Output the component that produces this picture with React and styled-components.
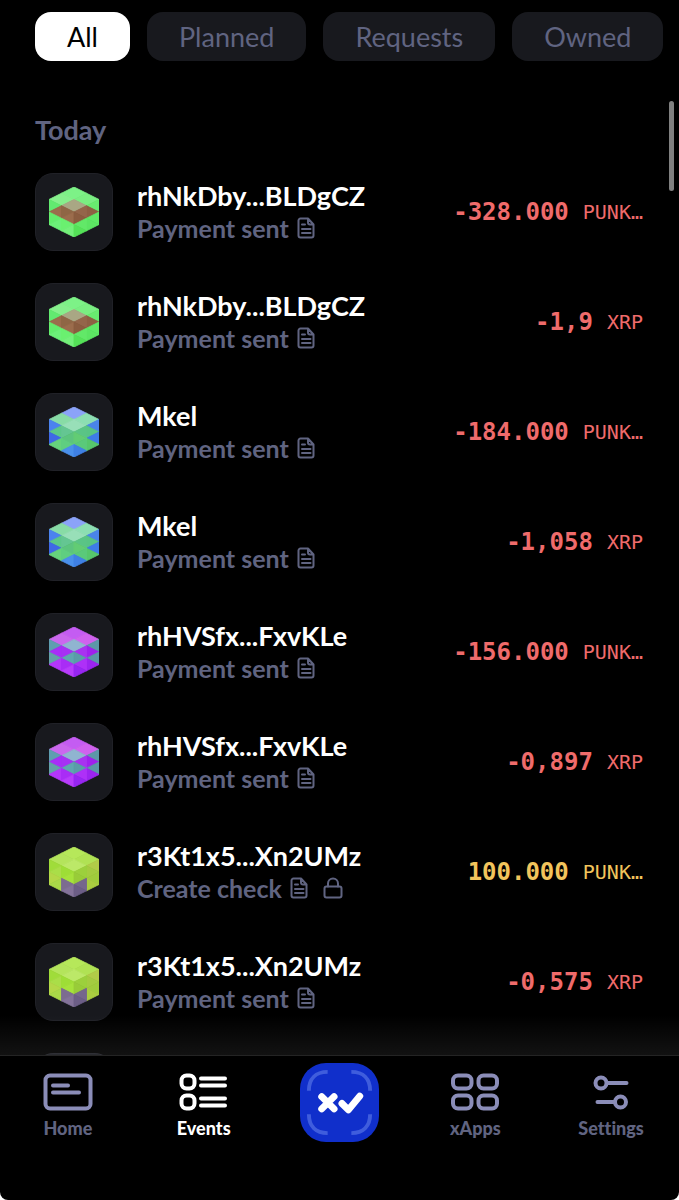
import React from 'react';
import styled, { createGlobalStyle } from 'styled-components';

const GlobalStyle = createGlobalStyle`
  * {
    box-sizing: border-box;
  }
  body {
    margin: 0;
    background: #fff;
    font-family: Lato, sans-serif;
    font-variant-ligatures: none;
  }
`;

const filters = ['All', 'Planned', 'Requests', 'Owned'];

const green = {
  top: ['#7df287', '#86f08c', '#7aee82', '#a9a784'],
  left: { a: '#62ea70', b: '#9b6c4c', c: '#63ed6c', d: '#6cf078', e: '#8f6645', f: '#9b6c4c', g: '#6af070', h: '#74f07a' },
  right: { a: '#68ec70', b: '#8d5f43', c: '#5fe866', d: '#5ce463', e: '#94654a', f: '#8a5c3f', g: '#62e868', h: '#55e258' },
};

const blue = {
  top: ['#8ba3f8', '#88dca6', '#8cdeb2', '#98dfb8'],
  left: { a: '#4c82ee', b: '#5cc78a', c: '#3f68e6', d: '#66d37c', e: '#64c692', f: '#5cc47e', g: '#5fce80', h: '#4a90ea' },
  right: { a: '#4a84ea', b: '#58c484', c: '#3f7be8', d: '#56c66c', e: '#5ac486', f: '#62cc74', g: '#5ac97a', h: '#3f80e4' },
};

const purple = {
  top: ['#c45cf2', '#cb68ee', '#d062ee', '#90b4d0'],
  left: { a: '#5f9eb0', b: '#a82cf8', c: '#62a0a8', d: '#b436fa', e: '#a630f4', f: '#5fa6b0', g: '#a92cf6', h: '#b83cfc' },
  right: { a: '#5c98a8', b: '#a020ee', c: '#5a98a6', d: '#9c24f0', e: '#a832f0', f: '#5a9ca8', g: '#ae30f8', h: '#9826f2' },
};

const lime = {
  top: ['#b6e85a', '#b4e45c', '#b0e254', '#bce868'],
  left: { a: '#a0dc3a', b: '#aade48', c: '#b4d848', d: '#aad848', e: '#9ede36', f: '#a6e23c', g: '#7c6c90', h: '#84739a' },
  right: { a: '#b0cc48', b: '#a4cc40', c: '#a0cc3c', d: '#aacc40', e: '#9cd03c', f: '#98cc38', g: '#75668c', h: '#6c5e86' },
};

const events = [
  { name: 'rhNkDby...BLDgCZ', type: 'Payment sent', amount: '-328.000', currency: 'PUNK…', colors: green },
  { name: 'rhNkDby...BLDgCZ', type: 'Payment sent', amount: '-1,9', currency: 'XRP', colors: green },
  { name: 'Mkel', type: 'Payment sent', amount: '-184.000', currency: 'PUNK…', colors: blue },
  { name: 'Mkel', type: 'Payment sent', amount: '-1,058', currency: 'XRP', colors: blue },
  { name: 'rhHVSfx...FxvKLe', type: 'Payment sent', amount: '-156.000', currency: 'PUNK…', colors: purple },
  { name: 'rhHVSfx...FxvKLe', type: 'Payment sent', amount: '-0,897', currency: 'XRP', colors: purple },
  { name: 'r3Kt1x5...Xn2UMz', type: 'Create check', amount: '100.000', currency: 'PUNK…', colors: lime, locked: true },
  { name: 'r3Kt1x5...Xn2UMz', type: 'Payment sent', amount: '-0,575', currency: 'XRP', colors: lime },
];

// triangles of one side face, on a 4 x 8 grid
const sideFace = {
  a: '0,2 0,4 2,3',
  b: '0,4 2,3 2,5',
  c: '0,4 0,6 2,5',
  d: '0,6 2,5 2,7',
  e: '2,3 4,4 2,5',
  f: '4,4 2,5 4,6',
  g: '2,5 2,7 4,6',
  h: '2,7 4,6 4,8',
};
const topFace = ['4,0 6,1 4,2 2,1', '2,1 4,2 2,3 0,2', '6,1 8,2 6,3 4,2', '4,2 6,3 4,4 2,3'];

function Cube({ colors }) {
  return (
    <svg width="50" height="50" viewBox="0 0 8 8" aria-hidden="true">
      {topFace.map((points, i) => (
        <Facet key={points} points={points} color={colors.top[i]} />
      ))}
      {Object.keys(sideFace).map((k) => (
        <Facet key={k} points={sideFace[k]} color={colors.left[k]} />
      ))}
      <g transform="matrix(-1 0 0 1 8 0)">
        {Object.keys(sideFace).map((k) => (
          <Facet key={k} points={sideFace[k]} color={colors.right[k]} />
        ))}
      </g>
    </svg>
  );
}

function DocIcon() {
  return (
    <Glyph width="18" height="22" viewBox="0 0 18 22" aria-hidden="true">
      <path d="M11 1.5H3.5a2 2 0 0 0-2 2v15a2 2 0 0 0 2 2h11a2 2 0 0 0 2-2V7.5zM11 1.5v4a2 2 0 0 0 2 2h3.5M5 7.5h3M5 12h8.500M5 16h8.500" />
    </Glyph>
  );
}

function LockIcon() {
  return (
    <Glyph width="20" height="22" viewBox="0 0 20 22" aria-hidden="true">
      <rect x="1.500" y="9.500" width="17" height="11" rx="2" />
      <path d="M5 9.500V6.500a5 5 0 0 1 10 0v3" />
    </Glyph>
  );
}

function HomeIcon() {
  return (
    <NavGlyph width="50" height="38" viewBox="0 0 50 38" aria-hidden="true">
      <rect x="2.500" y="2.500" width="45" height="33" rx="4.500" />
      <path d="M10 12.500h15M10 19.500h26" />
    </NavGlyph>
  );
}

function EventsIcon() {
  return (
    <NavGlyph width="50" height="38" viewBox="0 0 50 38" aria-hidden="true">
      <rect x="2.500" y="2.500" width="13" height="13" rx="5" />
      <rect x="2.500" y="22.500" width="13" height="13" rx="5" />
      <path d="M22 5.500h24M22 12.500h24M22 25.500h24M22 32.500h24" />
    </NavGlyph>
  );
}

function AppsIcon() {
  return (
    <NavGlyph width="50" height="38" viewBox="0 0 50 38" aria-hidden="true">
      <rect x="3" y="2.500" width="18.500" height="13" rx="5" />
      <rect x="28.500" y="2.500" width="18.500" height="13" rx="5" />
      <rect x="3" y="22.500" width="18.500" height="13" rx="5" />
      <rect x="28.500" y="22.500" width="18.500" height="13" rx="5" />
    </NavGlyph>
  );
}

function SettingsIcon() {
  return (
    <NavGlyph width="50" height="38" viewBox="0 0 50 38" aria-hidden="true">
      <circle cx="15" cy="10" r="5.500" />
      <path d="M21 10h19.500M11.500 29h17" />
      <circle cx="34.500" cy="29" r="5.500" />
    </NavGlyph>
  );
}

function ScanIcon() {
  return (
    <svg width="79" height="79" viewBox="0 0 80 80" fill="none" strokeLinecap="round" strokeLinejoin="round" aria-hidden="true">
      <path
        stroke="#3f5ddd"
        strokeWidth="4"
        strokeLinecap="butt"
        d="M9 28C9 16 16 9 28 9M52 9c12 0 19 7 19 19M9 52c0 12 7 19 19 19M52 71c12 0 19-7 19-19"
      />
      <path stroke="#fff" strokeWidth="7" d="M22 34l12.500 12.500M34.500 34l-12.500 12.500M42.500 41l6.500 6.500L60.500 33.500" />
    </svg>
  );
}

export default function App() {
  return (
    <Screen>
      <GlobalStyle />
      <Filters>
        {filters.map((f) => (
          <Filter key={f} type="button" $active={f === 'All'}>
            {f}
          </Filter>
        ))}
      </Filters>
      <Events>
        <Day>Today</Day>
        <List>
          {events.map((e, i) => (
            <Row key={i}>
              <Avatar>
                <Cube colors={e.colors} />
              </Avatar>
              <Info>
                <Name>{e.name}</Name>
                <Type>
                  {e.type}
                  <Icons>
                    <DocIcon />
                    {e.locked && <LockIcon />}
                  </Icons>
                </Type>
              </Info>
              <Amount $pending={e.locked}>
                {e.amount}
                <Currency>{e.currency}</Currency>
              </Amount>
            </Row>
          ))}
          <Row>
            <Avatar />
          </Row>
        </List>
        <Fade />
        <Thumb />
      </Events>
      <Nav>
        <NavItem href="#home">
          <HomeIcon />
          Home
        </NavItem>
        <NavItem href="#events" $active>
          <EventsIcon />
          Events
        </NavItem>
        <ScanCell>
          <Scan type="button" aria-label="Scan">
            <ScanIcon />
          </Scan>
        </ScanCell>
        <NavItem href="#xapps">
          <AppsIcon />
          xApps
        </NavItem>
        <NavItem href="#settings">
          <SettingsIcon />
          Settings
        </NavItem>
      </Nav>
    </Screen>
  );
}

const Screen = styled.div`
  display: flex;
  flex-direction: column;
  height: 100vh;
  overflow: hidden;
  background: #000;
  border-radius: 0 0 8px 8px;
`;

const Filters = styled.div`
  display: flex;
  flex: none;
  gap: 17px;
  padding: 12px 15px 0 35px;
`;

const Filter = styled.button`
  height: 49px;
  padding: 0 32px;
  border: 0;
  border-radius: 16px;
  background: ${(p) => (p.$active ? '#fff' : '#18191e')};
  color: ${(p) => (p.$active ? '#000' : '#606481')};
  font-family: inherit;
  font-size: 27px;
  line-height: 32px;
`;

const Events = styled.main`
  position: relative;
  flex: 1;
  min-height: 0;
  overflow: hidden;
  padding: 53px 36px 0 35px;
`;

const Day = styled.h2`
  margin: 0 0 27px;
  color: #606481;
  font-size: 27px;
  font-weight: 700;
  line-height: 32px;
`;

const List = styled.ul`
  display: flex;
  flex-direction: column;
  gap: 32px;
  margin: 0;
  padding: 0;
  list-style: none;
`;

const Row = styled.li`
  display: flex;
  align-items: center;
  gap: 24px;
`;

const Avatar = styled.div`
  display: flex;
  flex: none;
  align-items: center;
  justify-content: center;
  width: 78px;
  height: 78px;
  border: 1px solid #202127;
  border-radius: 18px;
  background: #18191e;
`;

const Facet = styled.polygon`
  fill: ${(p) => p.color};
  stroke: ${(p) => p.color};
  stroke-width: 0.14px;
  stroke-linejoin: round;
`;

const Info = styled.div`
  flex: 1;
  min-width: 0;
`;

const Name = styled.div`
  color: #fff;
  font-size: 27px;
  font-weight: 700;
  line-height: 32px;
`;

const Type = styled.div`
  display: flex;
  align-items: center;
  gap: 8px;
  color: #606481;
  font-size: 25px;
  font-weight: 700;
  line-height: 32px;
`;

const Icons = styled.span`
  display: flex;
  gap: 15px;
`;

const Glyph = styled.svg`
  fill: none;
  stroke: currentColor;
  stroke-width: 2px;
  stroke-linecap: round;
  stroke-linejoin: round;
`;

const Amount = styled.div`
  display: flex;
  align-items: center;
  gap: 14px;
  color: ${(p) => (p.$pending ? '#f2c45c' : '#ef6b6b')};
  font-family: 'DejaVu Sans Mono', monospace;
  font-size: 24px;
  font-weight: 700;
  line-height: 32px;
`;

const Currency = styled.span`
  font-size: 20px;
  font-weight: 400;
`;

const Fade = styled.div`
  position: absolute;
  right: 0;
  bottom: 0;
  left: 0;
  height: 40px;
  background: linear-gradient(rgba(255, 255, 255, 0), rgba(255, 255, 255, 0.07));
`;

const Thumb = styled.div`
  position: absolute;
  top: 40px;
  right: 5px;
  width: 5px;
  height: 90px;
  border-radius: 3px;
  background: #808080;
`;

const Nav = styled.nav`
  display: grid;
  flex: none;
  grid-template-columns: repeat(5, 1fr);
  height: 145px;
  padding-top: 7px;
  border-top: 1px solid #242424;
`;

const NavItem = styled.a`
  display: flex;
  flex-direction: column;
  align-items: center;
  gap: 6px;
  padding-top: 10px;
  color: ${(p) => (p.$active ? '#fff' : '#606481')};
  font-size: 18px;
  font-weight: 900;
  line-height: 22px;
  text-decoration: none;

  svg {
    color: ${(p) => (p.$active ? '#fff' : '#8b8db8')};
  }
`;

const NavGlyph = styled.svg`
  fill: none;
  stroke: currentColor;
  stroke-width: 4px;
  stroke-linecap: round;
  stroke-linejoin: round;
`;

const ScanCell = styled.div`
  display: flex;
  align-items: flex-start;
  justify-content: center;
`;

const Scan = styled.button`
  display: flex;
  padding: 0;
  border: 0;
  border-radius: 26px;
  background: #102fcb;
`;
